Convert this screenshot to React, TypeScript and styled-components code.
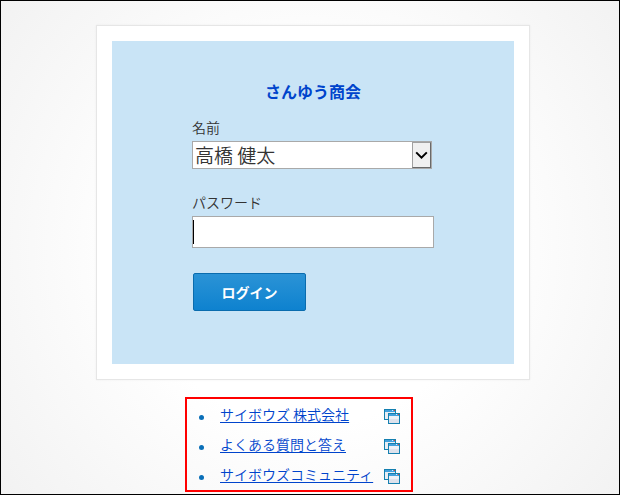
import React from 'react';
import styled, { createGlobalStyle } from 'styled-components';

const GlobalStyle = createGlobalStyle`
  *, *::before, *::after { box-sizing: border-box; }
  body {
    margin: 0;
    font-family: "Noto Sans CJK JP", "Liberation Sans", sans-serif;
    font-size: 14px;
    font-weight: 350;
    line-height: 20px;
    color: #333;
  }
`;

const Page = styled.div`
  min-height: 100vh;
  padding: 24px 0 2px 6px;
  border: 1px solid #000;
  display: flex;
  flex-direction: column;
  align-items: center;
  background: radial-gradient(circle at center, #fff 0%, #fff 45%, #f2f2f2 100%);
`;

const Card = styled.main`
  width: 70%;
  min-width: 434px;
  padding: 15px;
  background: #fff;
  border: 1px solid #e6e6e6;
  box-shadow: 0 0 2px rgba(0, 0, 0, 0.06);
`;

const Panel = styled.form`
  display: flex;
  flex-direction: column;
  padding: 40px 80px 53px;
  background: #c9e4f6;
`;

const Title = styled.h1`
  margin: 0 0 16px;
  font-size: 16px;
  line-height: 20px;
  font-weight: 700;
  text-align: center;
  color: #0044cc;
`;

const Field = styled.div<{ $gap: number }>`
  display: flex;
  flex-direction: column;
  margin-bottom: ${(p) => p.$gap}px;
`;

const Label = styled.label`
  margin-bottom: 4px;
`;

const Control = styled.div<{ $inset?: number }>`
  position: relative;
  display: flex;
  margin-right: ${(p) => p.$inset ?? 0}px;
`;

const Select = styled.select`
  appearance: none;
  width: 100%;
  height: 28px;
  padding: 0 22px 0 2px;
  border: 1px solid #a9a9a9;
  border-radius: 0;
  background: #fff;
  color: #333;
  font-family: inherit;
  font-size: 19px;
  font-weight: inherit;
  line-height: 26px;
`;

const Arrow = styled.span`
  position: absolute;
  top: 1px;
  right: 1px;
  bottom: 1px;
  width: 19px;
  display: flex;
  align-items: center;
  justify-content: center;
  background: #f0f0f0;
  border: 1px solid #696969;
  border-top-color: #a0a0a0;
  border-left-color: #a0a0a0;
  pointer-events: none;
`;

const Input = styled.input`
  width: 100%;
  height: 32px;
  padding: 0 2px;
  border: 1px solid #a9a9a9;
  border-radius: 0;
  background: #fff;
  font-family: inherit;
  font-size: 19px;
`;

const Caret = styled.span`
  position: absolute;
  left: 1px;
  top: 4px;
  width: 1px;
  height: 24px;
  background: #000;
  pointer-events: none;
`;

const LoginButton = styled.button`
  align-self: flex-start;
  width: 113px;
  height: 38px;
  margin-left: 1px;
  padding: 0;
  border: 1px solid #0a6cae;
  border-radius: 2px;
  background: linear-gradient(#2b93d6, #0e82cf);
  color: #fff;
  font-family: inherit;
  font-size: 14px;
  font-weight: 700;
`;

const Links = styled.ul`
  width: 228px;
  margin: 17px 28px 0 0;
  padding: 0 11px 1px 12px;
  border: 2px solid #f00;
  list-style: none;
`;

const LinkRow = styled.li`
  display: flex;
  align-items: center;
  height: 30px;

  &::before {
    content: '';
    flex: none;
    width: 5px;
    height: 5px;
    margin: 6px 16px 0 0;
    border-radius: 50%;
    background: #0a6fb8;
  }
`;

const Anchor = styled.a`
  flex: 1;
  white-space: nowrap;
  color: #0044cc;
  text-decoration: underline;
  text-decoration-thickness: 1px;
  text-underline-offset: 2px;
`;

const IconSvg = styled.svg`
  flex: none;
  margin-top: 5px;
`;

function WindowsIcon() {
  return (
    <IconSvg width="16" height="15" viewBox="0 0 16 15" shapeRendering="crispEdges" aria-hidden="true">
      <rect x="0" y="0" width="12" height="11" fill="#1580b0" />
      <rect x="1" y="1" width="10" height="2" fill="#42a0dc" />
      <rect x="1" y="3" width="10" height="7" fill="#e9edf4" />
      <rect x="8" y="1" width="1" height="1" fill="#cfeaff" />
      <rect x="10" y="1" width="1" height="1" fill="#f04020" />
      <rect x="4" y="4" width="12" height="11" fill="#1580b0" />
      <rect x="5" y="5" width="10" height="2" fill="#42a0dc" />
      <rect x="5" y="7" width="10" height="3" fill="#eef1f7" />
      <rect x="5" y="10" width="10" height="4" fill="#dde2ec" />
      <rect x="12" y="5" width="1" height="1" fill="#cfeaff" />
      <rect x="14" y="5" width="1" height="1" fill="#f04020" />
    </IconSvg>
  );
}

const links = ['サイボウズ 株式会社', 'よくある質問と答え', 'サイボウズコミュニティ'];

export default function App() {
  return (
    <>
      <GlobalStyle />
      <Page>
        <Card>
          <Panel onSubmit={(e: React.FormEvent) => e.preventDefault()}>
            <Title>さんゆう商会</Title>
            <Field $gap={23}>
              <Label htmlFor="name">名前</Label>
              <Control $inset={2}>
                <Select id="name" defaultValue="高橋 健太">
                  <option>高橋 健太</option>
                </Select>
                <Arrow>
                  <svg width="13" height="9" viewBox="0 0 13 9" aria-hidden="true">
                    <path d="M1.2 1.4 6.5 6.6 11.8 1.4" fill="none" stroke="#000" strokeWidth="2" />
                  </svg>
                </Arrow>
              </Control>
            </Field>
            <Field $gap={25}>
              <Label htmlFor="password">パスワード</Label>
              <Control>
                <Input id="password" type="password" />
                <Caret />
              </Control>
            </Field>
            <LoginButton type="submit">ログイン</LoginButton>
          </Panel>
        </Card>
        <Links>
          {links.map((text) => (
            <LinkRow key={text}>
              <Anchor href="#">{text}</Anchor>
              <WindowsIcon />
            </LinkRow>
          ))}
        </Links>
      </Page>
    </>
  );
}
